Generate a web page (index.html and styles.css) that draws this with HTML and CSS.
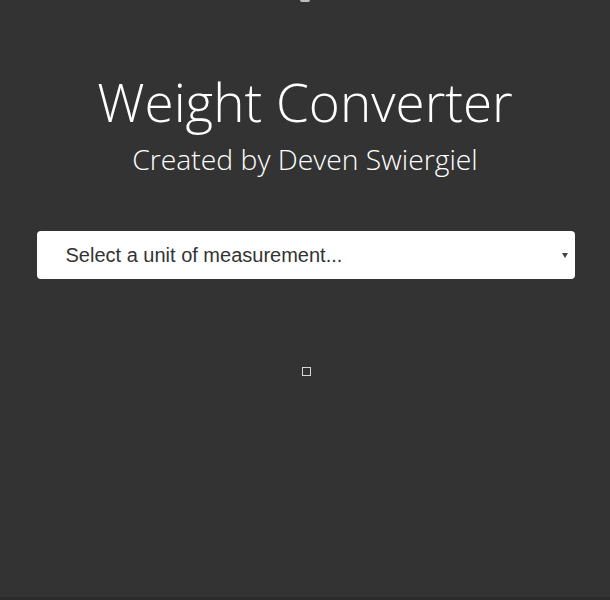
FILE: index.html
```html
<!DOCTYPE html>
<html>
<head>
<meta charset="utf-8">
<link rel="stylesheet" href="styles.css">
</head>
<body>
<div class="page">
  <div class="top-mark"></div>
  <header class="header">
    <h1 class="title">Weight Converter</h1>
    <p class="subtitle">Created by Deven Swiergiel</p>
  </header>
  <div class="select-wrap">
    <select class="unit-select">
      <option>Select a unit of measurement...</option>
    </select>
  </div>
  <div class="results">
    <div class="empty-box"></div>
  </div>
</div>
</body>
</html>
```
FILE: styles.css
```css
html, body {
  margin: 0;
  padding: 0;
  background: #333333;
  height: 100%;
}
.page {
  height: 597px;
  background: #333333;
  border-bottom: 3px solid #2b2b2b;
  display: flex;
  flex-direction: column;
  align-items: center;
}
.top-mark {
  width: 10px;
  height: 2px;
  background: #bdbdbd;
  border-radius: 0 0 3px 3px;
}
.header {
  margin-top: 68px;
  text-align: center;
  color: #ffffff;
  font-family: "Open Sans", "Lato", sans-serif;
  font-weight: 300;
}
.title {
  margin: 0;
  font-size: 53px;
  font-weight: 300;
  line-height: 64px;
}
.subtitle {
  margin: 7px 0 0;
  font-size: 28.3px;
  line-height: 36px;
}
.select-wrap {
  margin-top: 54px;
  margin-left: 1px;
  width: 538px;
  position: relative;
}
.select-wrap::after {
  content: "";
  position: absolute;
  right: 7px;
  top: 22px;
  border-left: 3px solid transparent;
  border-right: 3px solid transparent;
  border-top: 5px solid #444;
  pointer-events: none;
}
.unit-select {
  -webkit-appearance: none;
  appearance: none;
  width: 100%;
  height: 48px;
  border: none;
  border-radius: 4px;
  background: #ffffff;
  color: #333333;
  font-family: "Liberation Sans", Arial, sans-serif;
  font-size: 20px;
  padding: 0 0 0 29px;
  outline: none;
}
.results {
  margin-top: 88px;
  margin-left: 3px;
}
.empty-box {
  width: 7px;
  height: 7px;
  border: 1px solid #d8d8d8;
}
```
